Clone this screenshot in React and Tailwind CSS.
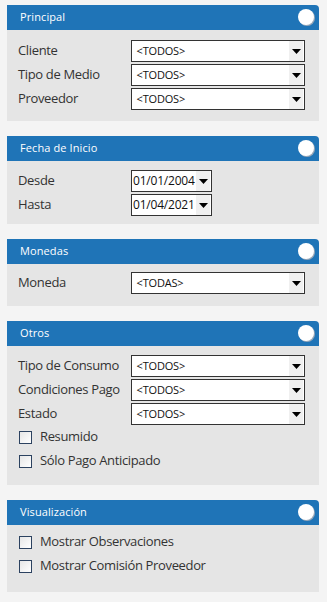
import React from 'react';

const font = { fontFamily: '"Open Sans", "Liberation Sans", sans-serif' };

function Panel({ title, children }) {
  return (
    <div className="w-[312px]">
      <div className="h-[25px] bg-[#1f74b7] rounded-tr-[4px] flex items-center justify-between pl-[13px] pr-[5px]">
        <span className="text-[11px] text-white tracking-[0.1px]">{title}</span>
        <span className="w-[16px] h-[16px] rounded-full bg-white shadow-[1px_1px_0_#9aa8b8] mb-[2px]"></span>
      </div>
      <div className="bg-[#e5e5e5] pl-[11px] pr-[14px]">{children}</div>
    </div>
  );
}

function Arrow() {
  return (
    <span className="w-[14px] h-full bg-[#f0f0f0] flex items-center justify-center">
      <svg width="9" height="5" viewBox="0 0 9 5"><path d="M0 0h9L4.5 5z" fill="#000" /></svg>
    </span>
  );
}

function Select({ value }) {
  return (
    <div className="w-[175px] h-[22px] border border-[#333] bg-white flex items-center justify-between pr-[1px]">
      <span className="text-[11px] text-[#111] pl-[5px] tracking-[-0.2px]">{value}</span>
      <Arrow />
    </div>
  );
}

function DateSelect({ value }) {
  return (
    <div className="w-[81px] h-[22px] border border-[#333] bg-white flex items-center justify-between pr-[1px]">
      <span className="text-[12px] text-[#111] pl-[1px] tracking-[-0.2px]">{value}</span>
      <Arrow />
    </div>
  );
}

function Row({ label, children }) {
  return (
    <div className="flex items-center h-[22px]">
      <span className="w-[113px] text-[13px] text-[#333] tracking-[-0.35px]">{label}</span>
      {children}
    </div>
  );
}

function Check({ label }) {
  return (
    <div className="flex items-center h-[24px]">
      <span className="w-[13px] h-[13px] border border-[#2c4260] bg-gradient-to-br from-[#e6e6e6] to-white ml-[1px]"></span>
      <span className="ml-[8px] text-[13px] text-[#333] tracking-[-0.35px]">{label}</span>
    </div>
  );
}

export default function App() {
  return (
    <div className="min-h-screen w-[327px] bg-[#f4f4f4] pt-[5px] pl-[7px] flex flex-col gap-[15px]" style={font}>
      <Panel title="Principal">
        <div className="pt-[10px] pb-[11px] flex flex-col gap-[2px]">
          <Row label="Cliente"><Select value="<TODOS>" /></Row>
          <Row label="Tipo de Medio"><Select value="<TODOS>" /></Row>
          <Row label="Proveedor"><Select value="<TODOS>" /></Row>
        </div>
      </Panel>

      <Panel title="Fecha de Inicio">
        <div className="pt-[9px] pb-[8px] flex flex-col gap-[2px]">
          <Row label="Desde"><DateSelect value="01/01/2004" /></Row>
          <Row label="Hasta"><DateSelect value="01/04/2021" /></Row>
        </div>
      </Panel>

      <Panel title="Monedas">
        <div className="pt-[8px] pb-[12px]">
          <Row label="Moneda"><Select value="<TODAS>" /></Row>
        </div>
      </Panel>

      <Panel title="Otros">
        <div className="pt-[9px] pb-[12px]">
          <div className="flex flex-col gap-[2px]">
            <Row label="Tipo de Consumo"><Select value="<TODOS>" /></Row>
            <Row label="Condiciones Pago"><Select value="<TODOS>" /></Row>
            <Row label="Estado"><Select value="<TODOS>" /></Row>
          </div>
          <Check label="Resumido" />
          <Check label="Sólo Pago Anticipado" />
        </div>
      </Panel>

      <Panel title="Visualización">
        <div className="pt-[5px] pb-[14px]">
          <Check label="Mostrar Observaciones" />
          <Check label="Mostrar Comisión Proveedor" />
        </div>
      </Panel>
    </div>
  );
}
